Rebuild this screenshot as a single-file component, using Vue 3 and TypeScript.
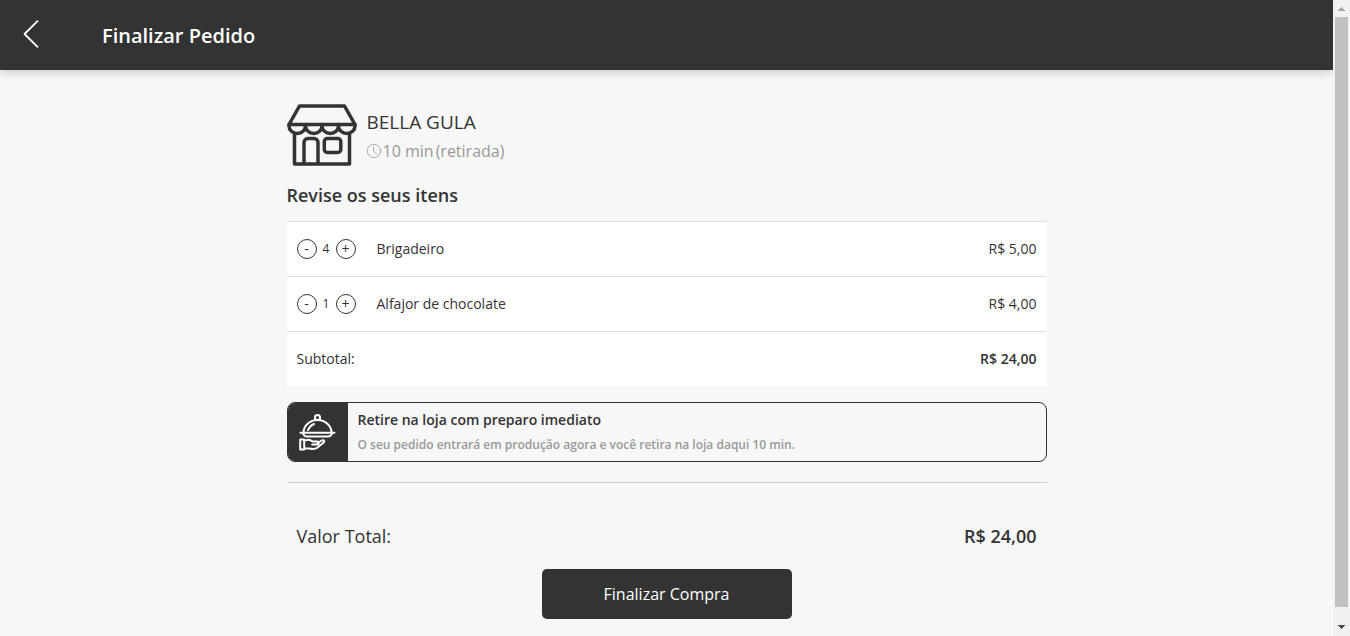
<script setup lang="ts">
import { computed, ref } from 'vue'

interface Item {
  id: number
  name: string
  price: number
  quantity: number
}

const items = ref<Item[]>([
  { id: 1, name: 'Brigadeiro', price: 5, quantity: 4 },
  { id: 2, name: 'Alfajor de chocolate', price: 4, quantity: 1 },
])

const total = computed(() => items.value.reduce((sum, i) => sum + i.price * i.quantity, 0))

function money(value: number): string {
  return 'R$ ' + value.toFixed(2).replace('.', ',')
}

function change(item: Item, step: number): void {
  item.quantity = Math.max(0, item.quantity + step)
}
</script>

<template>
  <div class="shell">
    <div class="page">
      <header class="topbar">
        <button class="back" type="button" aria-label="Voltar">
          <svg width="18" height="30" viewBox="0 0 18 30" fill="none" stroke="#fff" stroke-width="1.8" stroke-linecap="round" stroke-linejoin="round">
            <path d="M15.500 2.200 2.500 15l13 12.800" />
          </svg>
        </button>
        <h1>Finalizar Pedido</h1>
      </header>

      <main class="content">
        <section class="store">
          <svg class="store-icon" width="70" height="70" viewBox="0 0 70 70" fill="none" stroke="#333" stroke-width="3.5" stroke-linejoin="round" stroke-linecap="round">
            <path d="M12.500 6h45L68 24.500H2z" />
            <path d="M2 24.500v1.500a8.250 7.500 0 0 0 16.500 0 8.250 7.500 0 0 0 16.500 0 8.250 7.500 0 0 0 16.500 0A8.250 7.500 0 0 0 68 26v-1.500" />
            <path d="M18.500 24.500v2M35 24.500v2M51.500 24.500v2" />
            <path d="M7.500 33.500v30.500h55V33.500" />
            <path d="M17 63.500V42.500a4 4 0 0 1 4-4h6a4 4 0 0 1 4 4v21" />
            <rect x="37.300" y="38.500" width="16.500" height="14" rx="3" />
          </svg>
          <div class="store-text">
            <h2>BELLA GULA</h2>
            <p class="time">
              <svg width="15" height="16" viewBox="0 0 15 16" fill="none" stroke="#999" stroke-width="0.8" stroke-linecap="round">
                <circle cx="7" cy="8" r="6.700" />
                <path d="M6.500 4v4l3.500 3.500" />
              </svg>
              <span>10 min</span><span class="mode">(retirada)</span>
            </p>
          </div>
        </section>

        <h3>Revise os seus itens</h3>
        <ul class="items">
          <li v-for="item in items" :key="item.id">
            <button class="step" type="button" :aria-label="'Remover ' + item.name" @click="change(item, -1)">-</button>
            <span class="quantity">{{ item.quantity }}</span>
            <button class="step" type="button" :aria-label="'Adicionar ' + item.name" @click="change(item, 1)">+</button>
            <span class="name">{{ item.name }}</span>
            <span class="price">{{ money(item.price) }}</span>
          </li>
          <li>
            <span>Subtotal:</span>
            <strong class="price">{{ money(total) }}</strong>
          </li>
        </ul>

        <section class="pickup">
          <div class="pickup-icon">
            <svg width="38" height="38" viewBox="0 0 38 38" fill="none" stroke="#fff" stroke-width="2" stroke-linecap="round" stroke-linejoin="round">
              <circle cx="18.500" cy="4.500" r="2.600" />
              <path d="M4.500 19.500a14 12.500 0 0 1 28 0" />
              <path d="M9 17q2-4.500 6-6" />
              <path d="M1.500 19.800h34M4 20.500q1 3 4 3h21q3 0 4-3" />
              <path d="M1.200 26.500h4v10h-4zM5.200 28c3-2 6-1.500 8.500.500h4.500c2 0 2 3 0 3h-5M18.700 30l4-2.500c2-1 3.500.500 2 2L18.200 34.800c-2 1.500-6 1.200-8 .700h-5" />
            </svg>
          </div>
          <div class="pickup-text">
            <h4>Retire na loja com preparo imediato</h4>
            <p>O seu pedido entrará em produção agora e você retira na loja daqui 10 min.</p>
          </div>
        </section>

        <div class="total">
          <span>Valor Total:</span>
          <strong>{{ money(total) }}</strong>
        </div>
        <button class="submit" type="button">Finalizar Compra</button>
      </main>
    </div>

    <div class="scrollbar" aria-hidden="true">
      <svg width="17" height="17" viewBox="0 0 17 17" shape-rendering="crispEdges"><path d="M5 11h7L8.500 7z" fill="#a3a3a3" /></svg>
      <div class="thumb"></div>
      <svg width="17" height="17" viewBox="0 0 17 17" shape-rendering="crispEdges"><path d="M5 6h7l-3.500 4z" fill="#505050" /></svg>
    </div>
  </div>
</template>

<style>
body {
  margin: 0;
  background: #f7f7f7;
}
</style>

<style scoped>
.shell {
  display: grid;
  grid-template-columns: minmax(0, 1fr) 17px;
  height: 100vh;
  overflow: hidden;
  background: #f7f7f7;
  color: #333;
  font-family: "Open Sans", "Noto Sans", sans-serif;
  font-size: 14px;
  line-height: 20px;
}
.shell * {
  box-sizing: border-box;
}
h1, h2, h3, h4, p, ul {
  margin: 0;
  padding: 0;
}
button {
  font-family: inherit;
  color: inherit;
  padding: 0;
  border: 0;
  background: none;
  cursor: pointer;
}
.topbar {
  display: flex;
  align-items: center;
  height: 70px;
  padding: 0 22px;
  gap: 62px;
  background: #333;
  color: #fff;
  box-shadow: 0 2px 10px rgba(0, 0, 0, 0.2);
}
.back {
  display: flex;
  padding-bottom: 2px;
}
h1 {
  padding-top: 2px;
  font-size: 20px;
  line-height: 28px;
  font-weight: 600;
}
.content {
  display: flex;
  flex-direction: column;
  width: 100%;
  max-width: 760px;
  margin: 0 auto;
  padding-top: 30px;
}
.store {
  display: flex;
  align-items: center;
  gap: 10px;
}
.store-icon {
  display: block;
}
.store-text {
  padding-top: 2px;
}
h2 {
  font-size: 19px;
  line-height: 30px;
  font-weight: 500;
}
.time {
  display: flex;
  align-items: center;
  font-size: 16px;
  line-height: 28px;
  color: #999;
}
.time svg {
  margin-right: 1px;
}
.mode {
  margin-left: 2px;
}
h3 {
  margin: 12px 0 13px;
  font-size: 18px;
  line-height: 26px;
  font-weight: 600;
}
.items {
  list-style: none;
  background: #fff;
}
.items li {
  display: flex;
  align-items: center;
  height: 55px;
  padding: 0 10px;
  border-top: 1px solid #ddd;
}
.step {
  width: 20px;
  height: 20px;
  border: 1px solid #333;
  border-radius: 50%;
  font-size: 14px;
  line-height: 18px;
}
.quantity {
  width: 19px;
  text-align: center;
  font-size: 12px;
}
.name {
  margin-left: 21px;
}
.price {
  margin-left: auto;
}
strong {
  font-weight: 600;
}
.pickup {
  display: flex;
  min-height: 60px;
  margin-top: 16px;
  border: 1px solid #333;
  border-radius: 8px;
  overflow: hidden;
}
.pickup-icon {
  display: flex;
  align-items: center;
  justify-content: center;
  width: 60px;
  background: #333;
}
.pickup-text {
  padding: 5px 10px 3px;
}
h4 {
  font-size: 14px;
  line-height: 24px;
  font-weight: 600;
}
.pickup-text p {
  font-size: 12px;
  line-height: 26px;
  font-weight: 600;
  color: #999;
}
.total {
  display: flex;
  justify-content: space-between;
  margin-top: 20px;
  padding: 40px 10px 20px;
  border-top: 1px solid #ccc;
  font-size: 18px;
  line-height: 26px;
}
.submit {
  align-self: center;
  width: 250px;
  height: 50px;
  border-radius: 5px;
  background: #333;
  color: #fff;
  font-size: 16px;
}
.scrollbar {
  display: flex;
  flex-direction: column;
  background: #f1f1f1;
}
.scrollbar svg {
  display: block;
  flex: none;
}
.thumb {
  flex: 1;
  margin: 0 2px 12px;
  background: #c1c1c1;
}
</style>
